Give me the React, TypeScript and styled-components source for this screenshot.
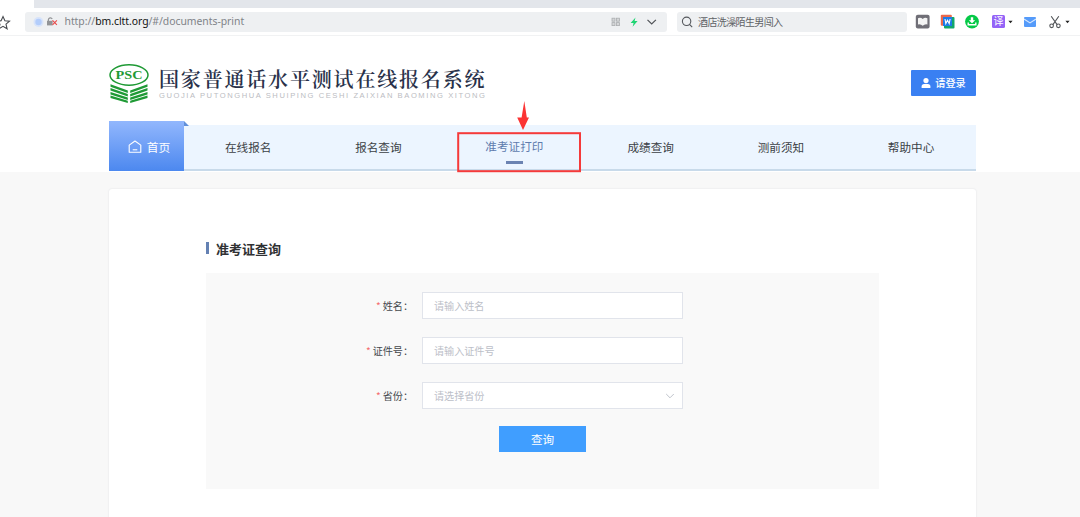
import React from "react";
import styled, { createGlobalStyle, css } from "styled-components";

const Global = createGlobalStyle`
  * { box-sizing: border-box; }
  body {
    margin: 0;
    background: #f8f8f8;
    font-family: "Noto Sans", "Noto Sans CJK SC", sans-serif;
    color: #333;
  }
`;

const Page = styled.div`
  height: 517px;
  overflow: hidden;
  display: flex;
  flex-direction: column;
`;

const TabStrip = styled.div`
  height: 8px;
  flex: none;
  background: #e3e6eb;
  border-left: 34px solid #fff;
`;

const Toolbar = styled.div`
  height: 28px;
  flex: none;
  display: flex;
  align-items: center;
  background: #fff;
  border-bottom: 1px solid #f1f2f3;
`;

const StarSlot = styled.div`
  width: 25px;
  height: 16px;
  overflow: hidden;
  flex: none;
`;

const Field = styled.div<{ $width: number }>`
  width: ${(p) => p.$width}px;
  height: 20px;
  flex: none;
  display: flex;
  align-items: center;
  border-radius: 3px;
  background: #eef0f2;
`;

const AddressField = styled(Field)`
  padding: 0 9px 0 8px;
`;

const SearchField = styled(Field)`
  margin-left: 10px;
  padding-left: 4px;
  gap: 4px;
`;

const Url = styled.span`
  margin-left: 5.5px;
  margin-bottom: 2px;
  flex: 1;
  font-family: "Noto Sans", sans-serif;
  font-size: 10.4px;
  line-height: 18px;
  letter-spacing: -0.03px;
  color: #808388;
  white-space: nowrap;
  b {
    font-weight: 400;
    color: #111;
  }
`;

const SearchText = styled.span`
  font-family: "Noto Sans CJK SC", sans-serif;
  font-size: 10px;
  line-height: 20px;
  letter-spacing: -0.62px;
  color: #606266;
`;

const Tools = styled.div`
  display: flex;
  align-items: center;
  flex: 1;
  margin-left: 8px;
`;

const Tool = styled.span<{ $gap: number }>`
  display: flex;
  align-items: center;
  margin-right: ${(p) => p.$gap}px;
`;

const TranslateBadge = styled.span`
  width: 13px;
  height: 13px;
  border-radius: 1.5px;
  background: #9463f7;
  color: #fff;
  font: 10px/12px "Noto Sans CJK SC", sans-serif;
  text-align: center;
`;

const Header = styled.header`
  height: 136px;
  flex: none;
  background: #fff;
`;

const Container = styled.div`
  width: 867px;
  margin-left: 109px;
`;

const Brand = styled.div`
  height: 85px;
  display: flex;
  padding-top: 28px;
`;

const Titles = styled.div`
  margin-left: 10px;
  flex: 1;
  white-space: nowrap;
`;

const SiteName = styled.h1`
  margin: 2px 0 0;
  font-family: "Noto Serif CJK SC", "Noto Sans CJK SC", serif;
  font-size: 20px;
  font-weight: 600;
  line-height: 26px;
  letter-spacing: 1.82px;
  color: #293149;
`;

const SiteLatin = styled.div`
  font-family: "Liberation Sans", sans-serif;
  font-size: 7.6px;
  line-height: 8px;
  letter-spacing: 1.57px;
  color: #bbbcc2;
`;

const Login = styled.button`
  width: 65px;
  height: 26px;
  margin-top: 6px;
  padding: 0;
  border: 0;
  border-radius: 1px;
  display: flex;
  align-items: center;
  justify-content: center;
  gap: 4px;
  background: #3a80f2;
  color: #fff;
  font: 500 10.2px/26px "Noto Sans CJK SC", sans-serif;
`;

const Nav = styled.nav`
  display: flex;
  align-items: flex-end;
  height: 50px;
`;

const HomeTab = styled.div`
  position: relative;
  width: 75px;
  height: 50px;
  display: flex;
  align-items: center;
  justify-content: center;
  gap: 5px;
  padding: 2px 0 0 5px;
  background: linear-gradient(#92b7fd, #4c88ef);
  color: #fff;
  font: 11.8px/20px "Noto Sans CJK SC", sans-serif;
  &::after {
    content: "";
    position: absolute;
    left: 75px;
    top: 0;
    width: 5px;
    height: 5px;
    background: #608fd9;
    clip-path: polygon(0 0, 100% 100%, 0 100%);
  }
`;

const Links = styled.div`
  display: flex;
  width: 792px;
  height: 46px;
  background: #ecf5ff;
  border-bottom: 2px solid #c8daea;
`;

const Link = styled.a<{ $active?: boolean }>`
  flex: none;
  display: flex;
  flex-direction: column;
  align-items: center;
  padding: 11px 41.9px 0 41.9px;
  font: 11.6px/22px "Noto Sans CJK SC", sans-serif;
  color: #3b3f45;
  white-space: nowrap;
  &:first-child {
    padding-left: 41px;
  }
  ${(p) =>
    p.$active &&
    css`
      padding: 10px 42.3px 0 41.9px;
      color: #5f7cae;
      &::after {
        content: "";
        width: 17px;
        height: 3px;
        margin-top: 4px;
        background: #6b83b2;
      }
    `}
`;

const Card = styled.main`
  height: 340px;
  margin-top: 17px;
  padding: 52px 97px 0;
  border-radius: 3px;
  background: #fff;
  box-shadow: 0 0 2px rgba(60, 70, 90, 0.14);
`;

const Heading = styled.h2`
  display: flex;
  align-items: center;
  gap: 7px;
  margin: 0;
  font: 700 13px/16px "Noto Sans CJK SC", sans-serif;
  color: #303133;
  &::before {
    content: "";
    width: 3px;
    height: 12px;
    margin-bottom: 3px;
    background: #6481b3;
  }
`;

const Panel = styled.form`
  height: 216px;
  width: 673px;
  margin-top: 16px;
  padding-top: 19px;
  display: flex;
  flex-direction: column;
  gap: 18px;
  background: #f9f9f9;
`;

const Row = styled.div`
  display: flex;
  align-items: center;
  height: 27px;
`;

const Label = styled.label`
  width: 207px;
  margin-right: 9px;
  text-align: right;
  font: 10.1px/26px "Noto Sans CJK SC", sans-serif;
  color: #45484d;
  &::before {
    content: "*";
    margin-right: 2px;
    color: #f56c6c;
  }
`;

const Control = styled.div`
  width: 261px;
  height: 27px;
  padding: 0 7px 0 11px;
  display: flex;
  align-items: center;
  justify-content: space-between;
  border: 1px solid #e1e4eb;
  background: #fff;
  font: 10.1px/25px "Noto Sans CJK SC", sans-serif;
  color: #bcc0c8;
`;

const Submit = styled.button`
  width: 87px;
  height: 26px;
  margin-left: 293px;
  margin-top: -1px;
  padding: 0;
  border: 0;
  background: #409eff;
  color: #fff;
  font: 11.6px/26px "Noto Sans CJK SC", sans-serif;
`;

const Annotation = styled.svg`
  position: absolute;
  left: 456px;
  top: 98px;
`;

const Star = () => (
  <svg width="25" height="16" viewBox="0 0 25 16">
    <path d="M3 1.5 L4.9 5.8 L9.5 6.2 L6 9.2 L7.1 13.8 L3 11.4 L-1.1 13.8 L0 9.2 L-3 6.2 L1.1 5.8Z" fill="none" stroke="#484b50" strokeWidth="1.1" />
  </svg>
);

const Caret = () => (
  <svg width="5" height="4" viewBox="0 0 5 4">
    <path d="M.4 .8h4.2L2.5 3.2z" fill="#222" />
  </svg>
);

const PscLogo = () => (
  <svg width="40" height="40" viewBox="0 0 40 40">
    <ellipse cx="20" cy="11" rx="19" ry="10.2" fill="#fff" stroke="#1f9a35" strokeWidth="1.5" />
    <text x="20" y="15.2" textAnchor="middle" fontFamily="Liberation Serif, serif" fontWeight="700" fontSize="13.2" textLength="27" lengthAdjust="spacingAndGlyphs" fill="#1f9a35">PSC</text>
    <g fill="#1f9a35">
      <path d="M1.5 20.2 L18.8 26.4V29L1.5 22.8z M38.5 20.2L21.2 26.4V29L38.5 22.8z" />
      <path d="M1.5 24.1 L18.8 30V32.5L1.5 26.6z M38.5 24.1L21.2 30V32.5L38.5 26.6z" />
      <path d="M1.5 27.9 L18.8 33.4V35.9L1.5 30.4z M38.5 27.9L21.2 33.4V35.9L38.5 30.4z" />
      <path d="M1.5 31.6 L18.8 36.8V39L1.5 34z M38.5 31.6L21.2 36.8V39L38.5 34z" />
    </g>
  </svg>
);

const links = ["在线报名", "报名查询", "准考证打印", "成绩查询", "测前须知", "帮助中心"];

const fields = [
  { label: "姓名：", hint: "请输入姓名" },
  { label: "证件号：", hint: "请输入证件号" },
  { label: "省份：", hint: "请选择省份", select: true },
];

export default function App() {
  return (
    <Page>
      <Global />
      <TabStrip />
      <Toolbar>
        <StarSlot><Star /></StarSlot>
        <AddressField $width={642}>
          <svg width="26" height="12" viewBox="0 0 26 12">
            <circle cx="5.5" cy="6" r="5" fill="#d8e4fa" />
            <circle cx="5.5" cy="6" r="3.2" fill="#b3cdfb" />
            <path d="M15.4 5V3.6a2 2 0 0 1 3.8-.6" fill="none" stroke="#929497" strokeWidth="1.2" />
            <rect x="14" y="4.8" width="5.6" height="4.6" fill="#929497" />
            <path d="M19.5 4.4l4.4 4.4M23.9 4.4l-4.4 4.4" stroke="#e94b4b" strokeWidth="1.1" />
          </svg>
          <Url>http://<b>bm.cltt.org</b>/#/documents-print</Url>
          <svg width="48" height="14" viewBox="0 0 48 14">
            <g fill="#d4d6d8" stroke="#aaadb0" strokeWidth=".8">
              <rect x="2" y="3.2" width="3" height="3" /><rect x="6.4" y="3.2" width="3" height="3" />
              <rect x="2" y="7.6" width="3" height="3" /><rect x="6.4" y="7.6" width="3" height="3" />
            </g>
            <path d="M25.5 2.4L20.6 7.9h3l-1 3.8 5-5.6h-3z" fill="#1fd573" />
            <path d="M37.5 4.8l4.2 4.2 4.2-4.2" fill="none" stroke="#505357" strokeWidth="1.2" />
          </svg>
        </AddressField>
        <SearchField $width={230}>
          <svg width="13" height="14" viewBox="0 0 13 14">
            <circle cx="5.6" cy="6.3" r="4.2" fill="none" stroke="#54575c" strokeWidth="1.1" />
            <path d="M8.5 9.3l2.7 2.9" stroke="#54575c" strokeWidth="1.1" />
          </svg>
          <SearchText>酒店洗澡陌生男闯入</SearchText>
        </SearchField>
        <Tools>
          <Tool $gap={10}>
            <svg width="15" height="15" viewBox="0 0 15 15">
              <rect x=".8" y=".8" width="13.8" height="13.8" rx="2" fill="#706f77" />
              <path d="M3 4.2q2.8-1 4.7.8 1.9-1.8 4.7-.8v6.2q-2.8-.6-4.7 1.4-1.9-2-4.7-1.4z" fill="#f4f4f4" />
            </svg>
          </Tool>
          <Tool $gap={10}>
            <svg width="15" height="15" viewBox="0 0 15 15">
              <rect x=".8" y=".8" width="11" height="11" rx="1" fill="#eb694b" />
              <rect x="4" y="3" width="10.5" height="11.4" rx="1" fill="#12a66b" />
              <rect x="3" y="3" width="9" height="9" fill="#1d7be8" />
              <path d="M5 5l.8 4.6 1.7-3.4 1.7 3.4.9-4.6" fill="none" stroke="#fff" strokeWidth="1.1" />
            </svg>
          </Tool>
          <Tool $gap={13}>
            <svg width="14" height="15" viewBox="0 0 14 15">
              <circle cx="7" cy="7.6" r="6.9" fill="#05c947" />
              <path d="M5.8 3.2h2.4v3h2L7 9.2 3.8 6.2h2z" fill="#fff" />
              <path d="M3.2 8.5v2.2h7.6V8.5" fill="none" stroke="#fff" strokeWidth="1.4" />
            </svg>
          </Tool>
          <Tool $gap={3}><TranslateBadge>译</TranslateBadge></Tool>
          <Tool $gap={11}><Caret /></Tool>
          <Tool $gap={13}>
            <svg width="12" height="12" viewBox="0 0 12 12">
              <rect y="1" width="12" height="10" rx="1" fill="#559bfa" />
              <path d="M0 3l6 3.9L12 3" fill="none" stroke="#d7e8ff" strokeWidth="1.1" />
            </svg>
          </Tool>
          <Tool $gap={4}>
            <svg width="12" height="14" viewBox="0 0 12 14">
              <g fill="none" stroke="#505357" strokeWidth="1.1">
                <path d="M2.2 1.3l5.9 8.3M9.8 1.3L3.9 9.6" />
                <circle cx="2.6" cy="10.8" r="1.8" /><circle cx="9.4" cy="10.8" r="1.8" />
              </g>
            </svg>
          </Tool>
          <Caret />
        </Tools>
      </Toolbar>
      <Header>
        <Container>
          <Brand>
            <PscLogo />
            <Titles>
              <SiteName>国家普通话水平测试在线报名系统</SiteName>
              <SiteLatin>GUOJIA PUTONGHUA SHUIPING CESHI ZAIXIAN BAOMING XITONG</SiteLatin>
            </Titles>
            <Login>
              <svg width="10" height="12" viewBox="0 0 10 12">
                <circle cx="5" cy="3.6" r="2.6" fill="#fff" />
                <path d="M.6 11V9.6q0-2.6 2.6-2.6h3.6q2.6 0 2.6 2.6V11z" fill="#fff" />
              </svg>
              请登录
            </Login>
          </Brand>
          <Nav>
            <HomeTab>
              <svg width="14" height="14" viewBox="0 0 14 14">
                <path d="M1.2 5.1L7 1l5.8 4.1v7.2H1.2z" fill="none" stroke="#fff" strokeWidth="1.1" strokeLinejoin="round" />
                <path d="M4.7 9.8h4.6" stroke="#fff" strokeWidth="1.1" />
              </svg>
              首页
            </HomeTab>
            <Links>
              {links.map((name) => (
                <Link key={name} $active={name === "准考证打印"}>{name}</Link>
              ))}
            </Links>
          </Nav>
        </Container>
      </Header>
      <Container>
        <Card>
          <Heading>准考证查询</Heading>
          <Panel>
            {fields.map((f) => (
              <Row key={f.label}>
                <Label>{f.label}</Label>
                <Control>
                  {f.hint}
                  {f.select && (
                    <svg width="10" height="8" viewBox="0 0 10 8">
                      <path d="M1.2 2l3.8 3.8L8.8 2" fill="none" stroke="#c0c4cc" strokeWidth="1" />
                    </svg>
                  )}
                </Control>
              </Row>
            ))}
            <Submit type="button">查询</Submit>
          </Panel>
        </Card>
      </Container>
      <Annotation width="126" height="76" viewBox="0 0 126 76">
        <rect x="2.2" y="35.2" width="121.8" height="38" fill="none" stroke="#f53a3a" strokeWidth="2" />
        <path d="M68.3 3L70.8 19.5H73L67 32L61.2 19.5H65.6z" fill="#fb3434" />
      </Annotation>
    </Page>
  );
}
